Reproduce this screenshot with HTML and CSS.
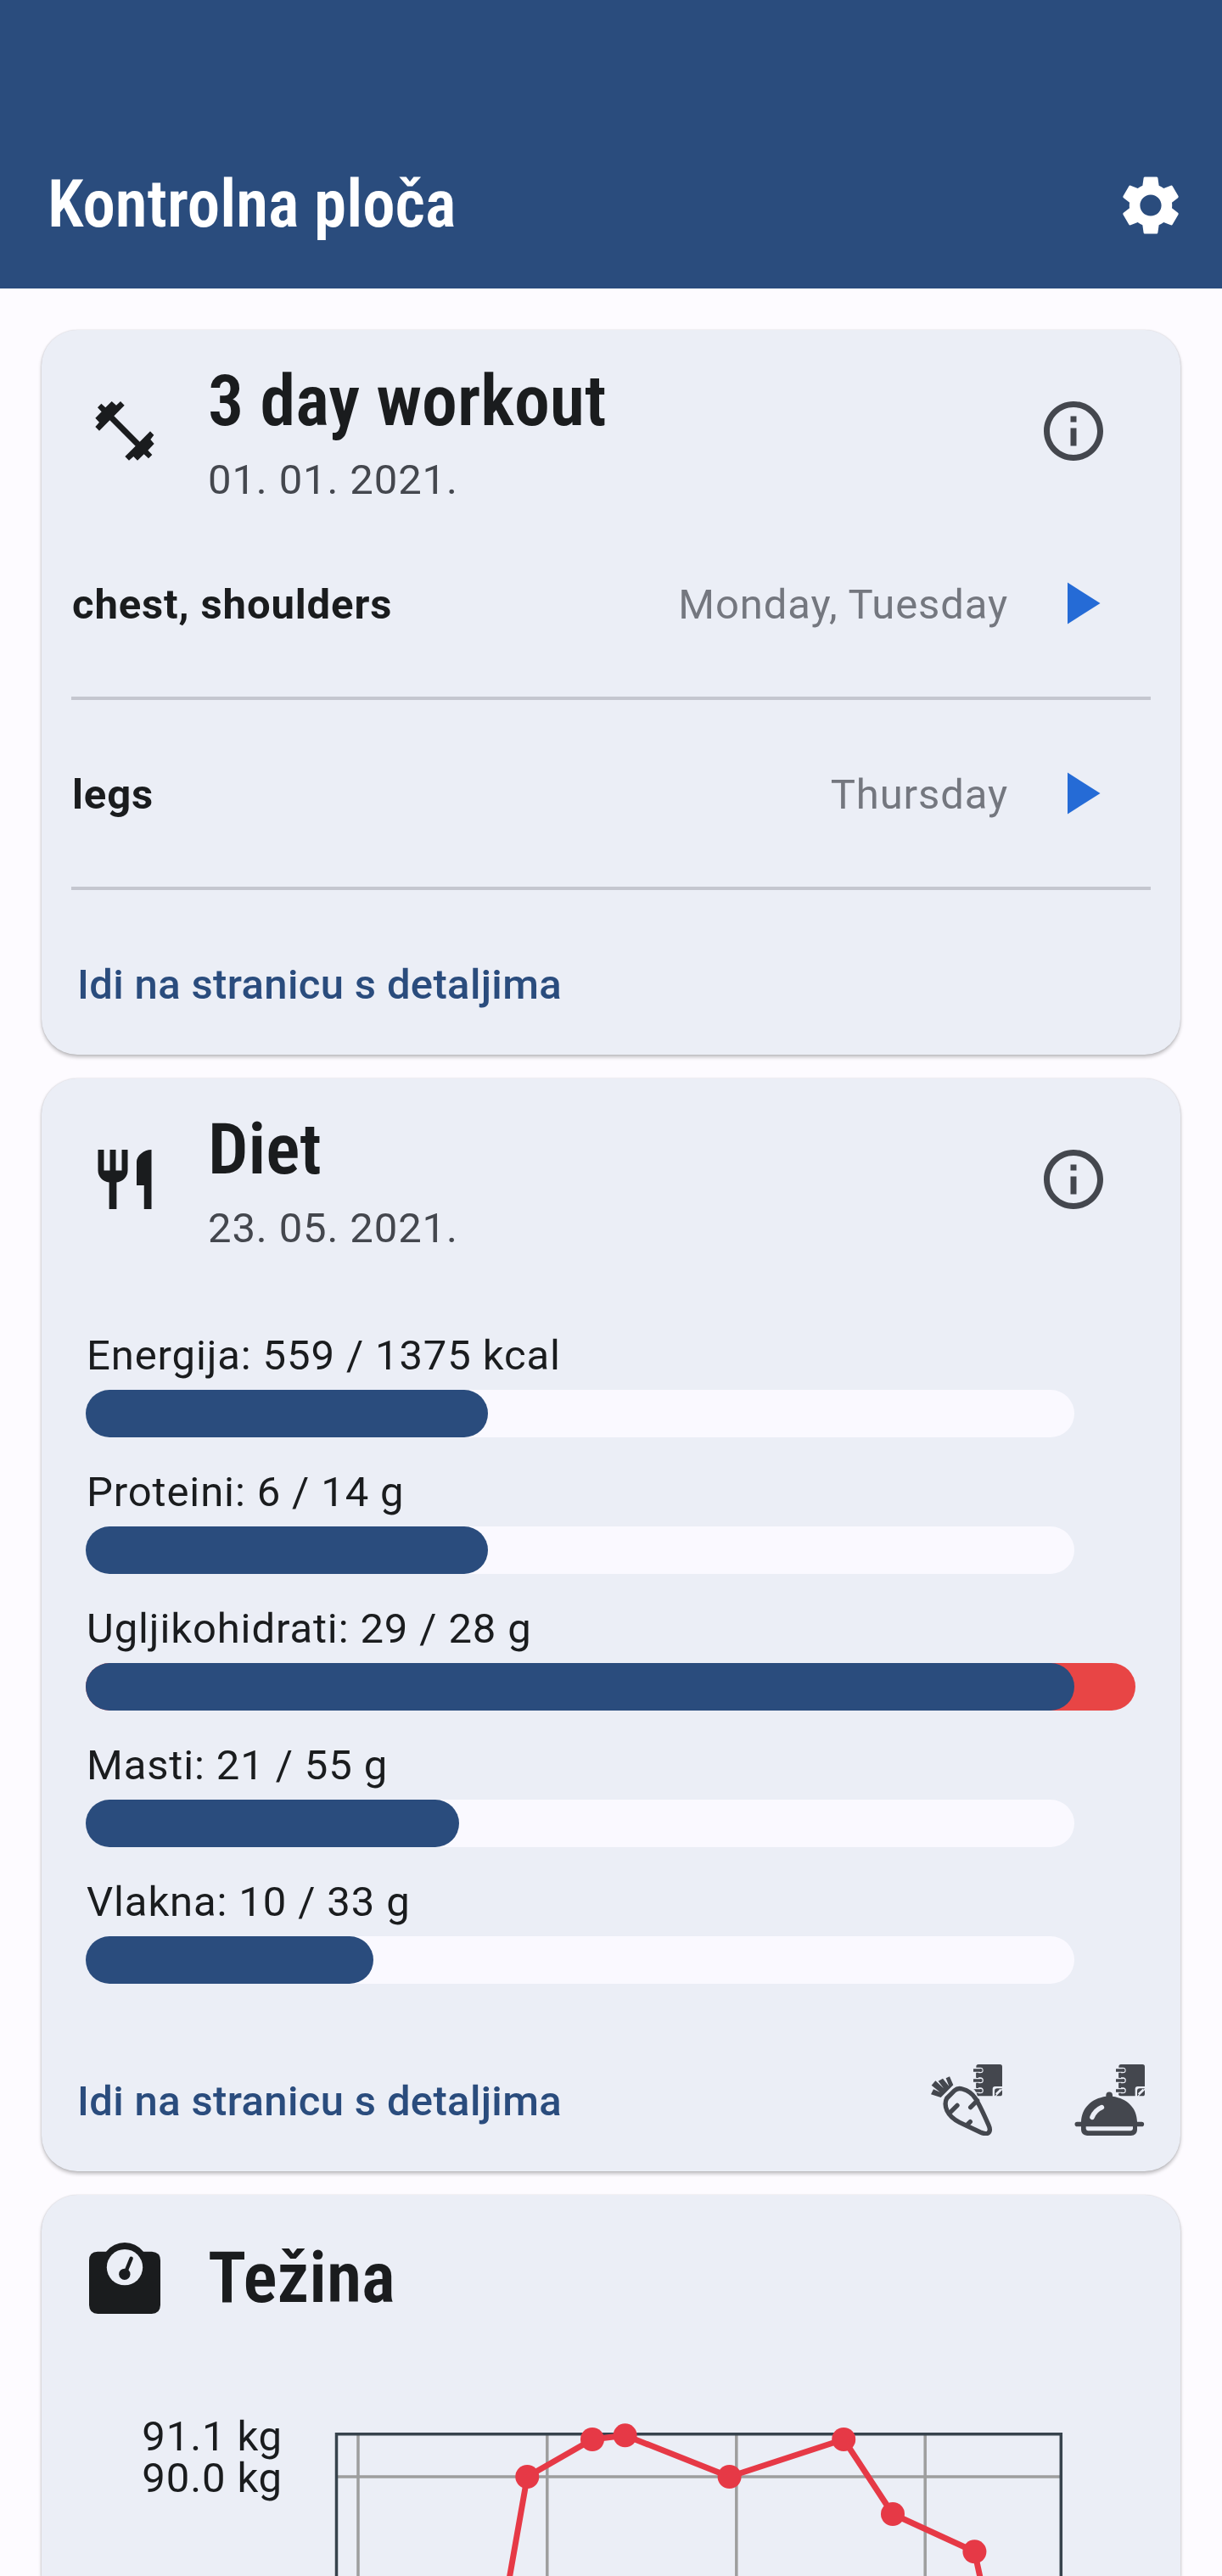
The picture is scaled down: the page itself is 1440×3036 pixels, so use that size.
FILE: index.html
```html
<!DOCTYPE html>
<html lang="hr">
<head>
<meta charset="utf-8">
<title>Kontrolna ploča</title>
<link rel="stylesheet" href="styles.css">
</head>
<body>
<header class="app-bar">
  <h1 class="app-title"><span class="condensed">Kontrolna ploča</span></h1>
  <svg class="icon" viewBox="0 0 24 24"><path d="M19.14 12.94c.04-.3.06-.61.06-.94 0-.32-.02-.64-.07-.94l2.03-1.58c.18-.14.23-.41.12-.61l-1.92-3.32c-.12-.22-.37-.29-.59-.22l-2.39.96c-.5-.38-1.03-.7-1.62-.94l-.36-2.54c-.04-.24-.24-.41-.48-.41h-3.84c-.24 0-.43.17-.47.41l-.36 2.54c-.59.24-1.13.57-1.62.94l-2.39-.96c-.22-.08-.47 0-.59.22L2.74 8.87c-.12.21-.08.47.12.61l2.03 1.58c-.05.3-.09.63-.09.94s.02.64.07.94l-2.03 1.58c-.18.14-.23.41-.12.61l1.92 3.32c.12.22.37.29.59.22l2.39-.96c.5.38 1.03.7 1.62.94l.36 2.54c.05.24.24.41.48.41h3.84c.24 0 .44-.17.47-.41l.36-2.54c.59-.24 1.13-.56 1.62-.94l2.39.96c.22.08.47 0 .59-.22l1.92-3.32c.12-.22.07-.47-.12-.61l-2.01-1.58zM12 15.6c-1.98 0-3.6-1.62-3.6-3.6s1.62-3.6 3.6-3.6 3.6 1.62 3.6 3.6-1.62 3.6-3.6 3.6z"/></svg>
</header>
<main class="dashboard">
  <section class="card">
    <div class="card-head">
      <svg class="icon" viewBox="75 78 252 252"><path d="M118 107l15 14 22-22 16 14 15-14 14 14-37 38 91 91 37-37 13 13-12 16 13 15-22 23 15 16-13 13-16-15-23 22-14-14-16 14-14-14 37-37-91-91-37 37-14-14 14-16-14-15 22-22-14-15z"/></svg>
      <div class="headings">
        <h2 class="card-title"><span class="condensed">3 day workout</span></h2>
        <p class="card-date">01. 01. 2021.</p>
      </div>
      <svg class="icon muted" viewBox="0 0 24 24"><path d="M11 7h2v2h-2zm0 4h2v6h-2zm1-9C6.48 2 2 6.48 2 12s4.48 10 10 10 10-4.48 10-10S17.52 2 12 2zm0 18c-4.41 0-8-3.59-8-8s3.59-8 8-8 8 3.59 8 8-3.59 8-8 8z"/></svg>
    </div>
    <div class="day">
      <span class="day-name">chest, shoulders</span>
      <span class="day-when">Monday, Tuesday</span>
      <svg class="icon play" viewBox="0 0 24 24"><path d="M10 5v14l11-7z"/></svg>
    </div>
    <div class="divider"></div>
    <div class="day">
      <span class="day-name">legs</span>
      <span class="day-when">Thursday</span>
      <svg class="icon play" viewBox="0 0 24 24"><path d="M10 5v14l11-7z"/></svg>
    </div>
    <div class="divider"></div>
    <div class="actions"><a class="link">Idi na stranicu s detaljima</a></div>
  </section>

  <section class="card">
    <div class="card-head">
      <svg class="icon" viewBox="0 0 24 24"><path d="M11 9H9V2H7v7H5V2H3v7c0 2.12 1.66 3.84 3.75 3.97V22h2.5v-9.03C11.34 12.84 13 11.12 13 9V2h-2v7zm5-3v8h2.5v8H21V2c-2.76 0-5 2.24-5 4z"/></svg>
      <div class="headings">
        <h2 class="card-title"><span class="condensed">Diet</span></h2>
        <p class="card-date">23. 05. 2021.</p>
      </div>
      <svg class="icon muted" viewBox="0 0 24 24"><path d="M11 7h2v2h-2zm0 4h2v6h-2zm1-9C6.48 2 2 6.48 2 12s4.48 10 10 10 10-4.48 10-10S17.52 2 12 2zm0 18c-4.41 0-8-3.59-8-8s3.59-8 8-8 8 3.59 8 8-3.59 8-8 8z"/></svg>
    </div>
    <div class="nutrients">
      <div class="nutrient"><p>Energija: 559 / 1375 kcal</p><div class="track"><div class="fill" style="width:40.7%"></div></div></div>
      <div class="nutrient"><p>Proteini: 6 / 14 g</p><div class="track"><div class="fill" style="width:40.7%"></div></div></div>
      <div class="nutrient"><p>Ugljikohidrati: 29 / 28 g</p><div class="track over"><div class="fill" style="width:94.2%"></div></div></div>
      <div class="nutrient"><p>Masti: 21 / 55 g</p><div class="track"><div class="fill" style="width:37.8%"></div></div></div>
      <div class="nutrient"><p>Vlakna: 10 / 33 g</p><div class="track"><div class="fill" style="width:29.1%"></div></div></div>
    </div>
    <div class="actions">
      <a class="link">Idi na stranicu s detaljima</a>
      <svg class="icon muted" viewBox="111 98 252 252">
        <defs>
          <g id="notebook">
            <path d="M279 98h76q8 0 8 8v70h-25q-9 0-9 9v25h-50q-8 0-8-8v-96q0-8 8-8z"/>
            <path d="M336 210v-17q0-10 10-10h17l-26 27zM342 210l21-21v13q0 8-8 8z"/>
            <path class="knock-line" d="M341 203l17-17"/>
            <path class="knock" d="M261 109h25a10 10 0 1 1 0 20h-25zM261 144h25a10 10 0 1 1 0 21h-25zM261 180h25a10 10 0 1 1 0 21h-25z"/>
            <path d="M271 127h8v19h-8zM271 163h8v19h-8zM271 199h8v8h-8z"/>
            <path d="M261 114h22q10-3 10 5t-10 5h-22zM261 150h22q10-3 10 5t-10 5h-22zM261 186h22q10-3 10 5t-10 5h-22z"/>
          </g>
        </defs>
        <use href="#notebook"/>
        <path class="knock" d="M244 174q24 9 32 36l-12 8-27-38z"/>
        <path class="carrot" d="M167 218l28-28q11-10 27-5 30 8 46 33 15 22 47 95 9 20-2 28-9 5-27-3l-74-35q-32-16-44-41-11-25-1-44zM176 271l28-28M251 250l24-24"/>
        <path class="carrot" d="M240 311l10-10"/>
        <path d="M111 204l9-18 23 10-30-24 14-16 29 27-19-26 16-9 22 27-11-28 13-6 13 30-44 44z"/>
      </svg>
      <svg class="icon muted" viewBox="615 98 252 252">
        <use href="#notebook" x="504"/>
        <path class="knock" d="M762 210h18l20 18h-34z"/>
        <path d="M642 301c2-49 35-82 88-90v-4a11 11 0 1 1 23 0v4c53 8 86 41 87 90h16a8.500 8.500 0 0 1 0 17h-16v12q-1 19-22 20H663q-20-2-21-20v-12h-14a8.500 8.500 0 0 1 0-17z"/>
        <path class="knock" d="M659 318h166v8q-1 6-7 7H666q-6-1-7-7z"/>
        <path class="shine" d="M681 285q9-24 34-35"/>
      </svg>
    </div>
  </section>

  <section class="card weight">
    <div class="card-head">
      <svg class="icon" viewBox="75 132 252 252">
        <path d="M105 164h30q27-32 66-32t66 32h30q30 2 30 31v158q-1 30-31 31H106q-30-1-31-31V195q0-30 30-31z"/>
        <circle class="knock" cx="201" cy="219.500" r="63.500"/>
        <path class="needle" d="M201 244l23-56"/>
        <circle cx="200.500" cy="244" r="20"/>
      </svg>
      <div class="headings"><h2 class="card-title"><span class="condensed">Težina</span></h2></div>
    </div>
    <svg class="chart" viewBox="49 2783 1342 253">
      <text x="333" y="2887.500">91.1 kg</text>
      <text x="333" y="2936.500">90.0 kg</text>
      <path class="grid" d="M422 2869v167M644.800 2869v167M867.800 2869v167M1090.200 2869v167M396 2919h854"/>
      <path class="frame" d="M396.500 3040V2868.800H1250.300V3040"/>
      <path class="series" d="M600 3040L621.300 2919 698 2875 736.600 2870.300 859.600 2919 994.200 2875 1052 2963 1148.400 3007.300 1155.500 3040"/>
      <g class="points"><circle cx="621.300" cy="2919" r="14"/><circle cx="698" cy="2875" r="14"/><circle cx="736.600" cy="2870.300" r="14"/><circle cx="859.600" cy="2919" r="14"/><circle cx="994.200" cy="2875" r="14"/><circle cx="1052" cy="2963" r="14"/><circle cx="1148.400" cy="3007.300" r="14"/></g>
    </svg>
  </section>
</main>
</body>
</html>
```
FILE: styles.css
```css
* { box-sizing: border-box; }
html, body { margin: 0; }
body {
  height: 3036px;
  overflow: hidden;
  background: #fdfbff;
  color: #1a1c1e;
  font: 400 49px/70px Roboto, "Open Sans", sans-serif;
  letter-spacing: .875px;
}
h1, h2, p { margin: 0; }
svg { display: block; flex: none; }

.app-bar {
  display: flex;
  align-items: center;
  justify-content: space-between;
  height: 340px;
  padding: 144px 42px 0 56px;
  background: #2a4c7d;
  color: #fff;
}
.app-title, .card-title { letter-spacing: 0; font-weight: 600; }
.app-title { padding-bottom: 2px; font-size: 77px; line-height: 98px; }
.card-title { font-size: 84px; line-height: 112px; }
.condensed { font-family: "Roboto Condensed", Roboto, sans-serif; font-stretch: 75%; }

.icon { width: 84px; height: 84px; fill: currentColor; }
.muted { color: #44474e; }
.knock { fill: #ebeef6; }
.knock-line { fill: none; stroke: #ebeef6; stroke-width: 6; }

.dashboard {
  display: flex;
  flex-direction: column;
  gap: 28px;
  padding: 49px 49px 0;
}
.card {
  border-radius: 42px;
  background: #ebeef6;
  box-shadow: 0 3px 4px rgba(0, 0, 0, .24), 0 0 2px rgba(0, 0, 0, .16);
}
.card-head {
  display: flex;
  align-items: center;
  gap: 56px;
  height: 238px;
  padding: 28px 84px 28px 56px;
}
.headings { flex: 1; }
.card-date { height: 70px; padding-top: 2px; color: #44474e; }

.day {
  display: flex;
  align-items: center;
  height: 168px;
  padding: 0 84px 0 36px;
}
.day-name, .day-when, .link { padding-top: 3px; }
.day-name { flex: 1; font-weight: 700; }
.day-when { margin-right: 35px; color: #74777f; }
.play { color: #256bd6; }
.divider {
  height: 56px;
  padding: 26px 35px;
}
.divider::before {
  content: "";
  display: block;
  height: 4px;
  background: #c4c6cf;
}
.actions {
  display: flex;
  align-items: center;
  gap: 84px;
  height: 168px;
  padding: 0 42px;
}
.link {
  flex: 1;
  color: #2a4c7d;
  font-weight: 500;
  letter-spacing: .35px;
}

.nutrients {
  display: flex;
  flex-direction: column;
  gap: 28px;
  padding: 52px 52px 53px;
}
.nutrient {
  display: flex;
  flex-direction: column;
  gap: 7px;
}
.nutrient p { height: 70px; padding: 2px 0 0 1px; }
.track {
  width: 1165px;
  height: 56px;
  border-radius: 28px;
  background: #faf9ff;
}
.track.over { width: 1237px; background: #e84545; }
.fill {
  height: 100%;
  border-radius: 28px;
  background: #2a4c7d;
}

.weight { border-radius: 42px 42px 0 0; }
.weight .card-head { height: 196px; }
.needle { fill: none; stroke: currentColor; stroke-width: 13; stroke-linecap: round; }
.carrot { fill: none; stroke: currentColor; stroke-width: 16; stroke-linecap: round; }
.shine { fill: none; stroke: #ebeef6; stroke-width: 17; stroke-linecap: round; }

.chart { width: 1342px; height: 253px; }
.chart text { text-anchor: end; fill: #1a1c1e; }
.grid { fill: none; stroke: #9e9e9e; stroke-width: 3.500; }
.frame { fill: none; stroke: #37434d; stroke-width: 3.500; }
.series { fill: none; stroke: #e63946; stroke-width: 7; stroke-linejoin: round; }
.points { fill: #e63946; }
```
